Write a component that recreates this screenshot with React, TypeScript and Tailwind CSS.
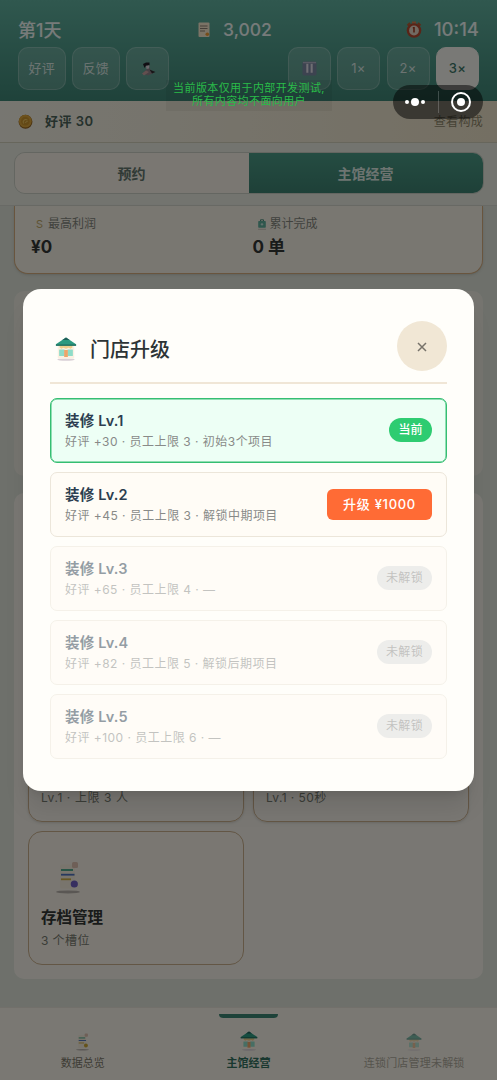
import clsx from "clsx";

type Level = {
  name: string;
  desc: string;
  state: "current" | "available" | "locked";
};

const levels: Level[] = [
  { name: "装修 Lv.1", desc: "好评 +30 · 员工上限 3 · 初始3个项目", state: "current" },
  { name: "装修 Lv.2", desc: "好评 +45 · 员工上限 3 · 解锁中期项目", state: "available" },
  { name: "装修 Lv.3", desc: "好评 +65 · 员工上限 4 · —", state: "locked" },
  { name: "装修 Lv.4", desc: "好评 +82 · 员工上限 5 · 解锁后期项目", state: "locked" },
  { name: "装修 Lv.5", desc: "好评 +100 · 员工上限 6 · —", state: "locked" },
];

function StoreIcon({ className }: { className?: string }) {
  return (
    <svg viewBox="0 0 24 24" preserveAspectRatio="none" className={className}>
      <ellipse cx="12" cy="22.6" rx="9.5" ry="1.1" fill="#d9d0d6" />
      <rect x="3" y="8" width="18" height="13.5" rx="1" fill="#fbf1e2" />
      <path d="M5 8h14v2.5l-2 1.2-2-1-3 1-3-1-2 1-2-1.2z" fill="#f0cf8d" />
      <path d="M12 .5 23 7.2v1.5H1V7.2z" fill="#2c9a80" />
      <path d="M12 .5 16 3H8z" fill="#1f5f58" />
      <path d="M1 7.5h22v1.2H1z" fill="#216b5c" />
      <rect x="4.5" y="12.5" width="6" height="6.5" rx="0.5" fill="#8fdcc8" />
      <rect x="13.5" y="12.5" width="6" height="6.5" rx="0.5" fill="#8fdcc8" />
      <rect x="10" y="13" width="4" height="7" fill="#eda56a" />
    </svg>
  );
}

function OrderIcon({ className }: { className?: string }) {
  return (
    <svg viewBox="0 0 10 11" className={className}>
      <path d="M3.5 2.5V.8h3v1.7" stroke="#4b8b7b" fill="none" />
      <rect x="1.2" y="2" width="7.6" height="6.8" rx="0.8" fill="#5fae9b" />
      <path d="M5 4v2.6M3.7 5.3h2.6" stroke="#d7ece4" strokeWidth="0.9" />
      <path d="M1 10.3h8" stroke="#c2bcb4" strokeWidth="0.8" />
    </svg>
  );
}

function ReportIcon({ className, dot = "#6e5fc0" }: { className?: string; dot?: string }) {
  return (
    <svg viewBox="0 0 24 32" className={className}>
      <rect x="4" y="3" width="15" height="24" rx="2" fill="#f3ebda" />
      <rect x="16" y="0.5" width="6" height="6" rx="1.5" fill="#dcbfae" />
      <path d="M5 8.5h12" stroke="#3fa185" strokeWidth="1.8" />
      <path d="M5 13.2h13.5" stroke="#4f73bd" strokeWidth="1.8" />
      <path d="M5 17.8h10" stroke="#cfae46" strokeWidth="1.8" />
      <ellipse cx="12" cy="30.4" rx="12" ry="1.5" fill="#b5aea9" />
      <circle cx="18.3" cy="22.5" r="3.6" fill={dot} />
    </svg>
  );
}

function NoteIcon() {
  return (
    <svg viewBox="0 0 12 16" className="h-4 w-3">
      <rect x="0.5" y="0.5" width="11" height="14.5" rx="1" fill="#f6e6cc" />
      <path d="M2 4h7.5M2 6.5h7.5M2 9h5" stroke="#8b7e72" strokeWidth="1" />
      <circle cx="9.3" cy="12.2" r="1.8" fill="#ee9b34" />
    </svg>
  );
}

function ClockIcon() {
  return (
    <svg viewBox="0 0 18 18" className="h-[18px] w-[18px]">
      <path d="M2.5 4.5 5 2M15.5 4.5 13 2" stroke="#b35a33" strokeWidth="2" />
      <rect x="7" y="0.5" width="4" height="2" fill="#d67a4c" />
      <circle cx="9" cy="9.5" r="7.3" fill="#b5492f" />
      <circle cx="9" cy="9.5" r="4.9" fill="#e2d5c4" />
      <path d="M7.8 6.8H9v4.7" stroke="#a33c22" strokeWidth="1.6" fill="none" />
    </svg>
  );
}

function CoinIcon() {
  return (
    <svg viewBox="0 0 16 16" className="h-[15px] w-[15px]">
      <circle cx="8" cy="8.3" r="7.4" fill="#8f5f1d" />
      <circle cx="7.8" cy="7.6" r="6.8" fill="#dba53a" />
      <circle cx="7.8" cy="7.6" r="4.6" fill="#c9932c" />
      <path d="M6 10.2c-1.6-2.4 1-5.4 4-3.8M7.5 9.2l2.8-1.6" stroke="#ecc561" strokeWidth="1.1" fill="none" />
    </svg>
  );
}

function SoundIcon() {
  return (
    <svg viewBox="0 0 16 16" className="h-4 w-4">
      <path d="M4.5 3.5 7 8 2.5 12.5 8 14.5l4.5-2L9.5 7z" fill="#8d8189" />
      <path d="M3 3 6 1.5h3.5V5L6 4.5 4.5 7z" fill="#221d26" />
      <path d="m6 5 3.5-1L9 7.5 6.5 8z" fill="#d9d2d8" />
      <path d="m2 12.5 4-3 3 1.5-5 3.5z" fill="#c79f9f" />
      <path d="m9.5 8.5 6 2.5-3.5 1.5z" fill="#332a2f" />
    </svg>
  );
}

function PauseIcon() {
  return (
    <svg viewBox="0 0 16 16" className="h-[15px] w-[15px]">
      <rect x="0.5" y="0.5" width="15" height="15" rx="2" fill="#7a86a0" />
      <path d="M5.7 3v9.5M10.3 3v9.5" stroke="#dfdee6" strokeWidth="2.2" />
      <path d="M1 1.7h14" stroke="#b3b3c6" strokeWidth="1.5" />
    </svg>
  );
}

function HeaderButton({ children, className }: { children: React.ReactNode; className?: string }) {
  return (
    <button
      className={clsx(
        "flex h-[43px] items-center justify-center rounded-[10px] border text-[13px] tracking-[0.3px]",
        className ?? "w-[43px] border-white/20 bg-white/15 text-white/75",
      )}
    >
      {children}
    </button>
  );
}

function Header() {
  return (
    <header className="h-[101px] bg-linear-to-b from-[#60b09e] to-[#3e8575] px-[18px] pt-[18px]">
      <div className="flex h-6 items-center justify-between text-[18px] font-medium text-white/90">
        <span className="w-[140px]">第1天</span>
        <span className="mr-[53px] flex items-center gap-[13px] text-[17.5px]">
          <NoteIcon />
          3,002
        </span>
        <span className="flex w-[114px] items-center justify-end gap-[11px] text-[18.5px]">
          <ClockIcon />
          10:14
        </span>
      </div>
      <div className="mt-[5px] flex justify-between">
        <div className="flex gap-[6.5px]">
          <HeaderButton className="w-[47.5px] border-white/20 bg-white/15 text-white/75">好评</HeaderButton>
          <HeaderButton className="w-[47.5px] border-white/20 bg-white/15 text-white/75">反馈</HeaderButton>
          <HeaderButton>
            <SoundIcon />
          </HeaderButton>
        </div>
        <div className="flex gap-[6.5px]">
          <HeaderButton>
            <PauseIcon />
          </HeaderButton>
          <HeaderButton>1×</HeaderButton>
          <HeaderButton>2×</HeaderButton>
          <HeaderButton className="w-[43px] border-[#f2f2ec] bg-[#f2f2ec] font-medium text-[#3d7768]">3×</HeaderButton>
        </div>
      </div>
    </header>
  );
}

function StatusBar() {
  return (
    <div className="flex h-[42px] items-center border-b border-[#cfccb8] bg-linear-to-r from-[#efede2] to-[#e9dfc6] pr-[14px] pl-[18px] text-[13px]">
      <CoinIcon />
      <span className="ml-3 font-semibold tracking-[0.5px] text-[#4b6259]">好评 30</span>
      <span className="ml-auto text-[12px] tracking-[0.3px] text-[#8c8568]">查看构成</span>
    </div>
  );
}

function Tabs() {
  return (
    <div className="h-[63px] border-b border-[#d3d5cc] bg-[#e6e8df] px-[13.5px] pt-[9px]">
      <div className="flex h-[42px] overflow-hidden rounded-[11px] border border-[#c9ccc2] text-[14px] font-bold">
        <div className="flex flex-1 items-center justify-center bg-[#f4efe4] text-[#62756c]">预约</div>
        <div className="flex flex-1 items-center justify-center bg-linear-to-b from-[#4a9985] to-[#3d8170] text-[#dce9e3]">
          主馆经营
        </div>
      </div>
    </div>
  );
}

function Stats() {
  return (
    <section className="mx-[14px] flex h-[68px] rounded-b-[14px] border-x-[1.5px] border-b-[1.5px] border-[#d3ab7c] bg-[#f3eee3] px-4 pt-[9px] shadow-sm">
      <div className="flex-1">
        <p className="flex h-[18px] items-center text-[12px] text-[#82857b]">
          <span className="mr-1 ml-[5px] w-2 text-[11px] text-[#bda768]">S</span>
          最高利润
        </p>
        <p className="text-[17px] leading-7 font-bold text-[#323735]">¥0</p>
      </div>
      <div className="flex-1 pl-2">
        <p className="flex h-[18px] items-center text-[12px] text-[#82857b]">
          <OrderIcon className="mr-[3px] ml-1 h-[11px] w-[10px]" />
          累计完成
        </p>
        <p className="text-[17px] leading-7 font-bold text-[#323735]">0 单</p>
      </div>
    </section>
  );
}

function ManageCards() {
  return (
    <section className="mx-[14px] mt-[17px] flex h-[486px] flex-col justify-end rounded-[10px] bg-[#f2efe7] p-[14px]">
      <div className="grid grid-cols-2 gap-[9px]">
        <div className="flex h-[134px] flex-col justify-end rounded-[14px] border-[1.5px] border-[#c6ac8a] px-3 pb-[14px] text-[12px] leading-[18px] tracking-[0.6px] text-[#777a70] shadow-sm">
          Lv.1 · 上限 3 人
        </div>
        <div className="flex h-[134px] flex-col justify-end rounded-[14px] border-[1.5px] border-[#c6ac8a] px-3 pb-[14px] text-[12px] leading-[18px] tracking-[0.4px] text-[#777a70] shadow-sm">
          Lv.1 · 50秒
        </div>
        <div className="h-[134px] rounded-[14px] border-[1.5px] border-[#c6ac8a] bg-[#f4efe4] px-3 pt-[29px]">
          <ReportIcon className="ml-[15px] h-[33px] w-6" />
          <p className="mt-[12px] text-[15.5px] leading-[24px] font-bold text-[#323735]">存档管理</p>
          <p className="mt-[2px] text-[12px] leading-[18px] tracking-[0.4px] text-[#777a70]">3 个槽位</p>
        </div>
      </div>
    </section>
  );
}

function BottomNav() {
  return (
    <nav className="mt-[28px] flex h-[74px] border-t border-[#e4e1d7] bg-[#f4f0e6] text-[11px]">
      <div className="flex flex-1 flex-col items-center pt-[25px] text-[#7c7869]">
        <ReportIcon className="h-[18px] w-[13px]" dot="#cba735" />
        <span className="mt-1 leading-4">数据总览</span>
      </div>
      <div className="flex flex-1 flex-col items-center pt-[6px] font-bold text-[#33705f]">
        <span className="h-[3.5px] w-[59px] rounded-b-sm bg-[#3b8572]" />
        <StoreIcon className="mt-[13.5px] h-5 w-[18px]" />
        <span className="mt-1 leading-4">主馆经营</span>
      </div>
      <div className="flex flex-1 flex-col items-center pt-[25px] text-[#7c7869] opacity-60">
        <StoreIcon className="h-[18px] w-[16px]" />
        <span className="mt-1 leading-4 tracking-[0.2px]">连锁门店管理未解锁</span>
      </div>
    </nav>
  );
}

function LevelRow({ level }: { level: Level }) {
  return (
    <li
      className={clsx(
        "flex h-[65px] items-center justify-between rounded-[7px] border-[1.5px] px-[14px]",
        level.state === "current" && "border-[#35be72] bg-[#edfff5] shadow-[inset_0_0_0_0.5px_#35be72]",
        level.state === "available" && "border-[#ece6da] bg-[#fffcf6]",
        level.state === "locked" && "border-[#ece6da] bg-[#fffcf6] opacity-50",
      )}
    >
      <div className="whitespace-nowrap">
        <p className="text-[14.5px] leading-[21px] font-semibold tracking-[0.2px] text-[#2c3e50]">{level.name}</p>
        <p className="text-[12px] leading-[21px] tracking-[0.47px] text-[#888a88]">{level.desc}</p>
      </div>
      {level.state === "current" && (
        <span className="mb-px flex h-6 w-[43px] items-center justify-center rounded-full bg-[#2ecc71] text-[12px] font-medium text-white">
          当前
        </span>
      )}
      {level.state === "available" && (
        <button className="h-[31px] w-[105px] rounded-[6px] bg-[#ff6b35] text-[13px] font-medium tracking-[0.7px] text-white">
          升级 ¥1000
        </button>
      )}
      {level.state === "locked" && (
        <span className="mb-px flex h-6 w-[55px] items-center justify-center rounded-full bg-[#dddddd] text-[12px] tracking-[0.3px] text-[#888888]">
          未解锁
        </span>
      )}
    </li>
  );
}

function UpgradeDialog() {
  return (
    <div className="absolute inset-0 flex items-center justify-center bg-black/50">
      <div className="h-[502px] w-[451px] rounded-[18px] bg-[#fffefa] px-[27px] pt-8 shadow-xl">
        <div className="flex h-[63px] justify-between border-b-2 border-[#f0e6d6]">
          <div className="flex items-center gap-[13px] self-start pt-[11px] pl-[5px]">
            <StoreIcon className="h-6 w-[22px]" />
            <h2 className="mt-[2px] text-[20px] leading-[32px] font-medium text-[#2d3436]">门店升级</h2>
          </div>
          <button className="flex h-[50px] w-[50px] items-center justify-center rounded-full bg-[#f1e7d5]">
            <svg viewBox="0 0 10 10" className="mt-[2px] h-[10px] w-[10px]">
              <path d="m1 1 8 8M9 1 1 9" stroke="#77726a" strokeWidth="1.5" />
            </svg>
          </button>
        </div>
        <ul className="mt-[14px] flex flex-col gap-[9px]">
          {levels.map((level) => (
            <LevelRow key={level.name} level={level} />
          ))}
        </ul>
      </div>
    </div>
  );
}

export default function App() {
  return (
    <div className="relative h-[1080px] w-[497px] overflow-hidden bg-[#dce0d6] font-[Inter,'Noto_Sans_CJK_SC',sans-serif]">
      <Header />
      <StatusBar />
      <Tabs />
      <Stats />
      <section className="mx-[14px] mt-[17px] h-[185px] rounded-[10px] bg-[#eae8df]" />
      <ManageCards />
      <BottomNav />
      <UpgradeDialog />

      {/* watermark and host capsule float above everything */}
      <div className="absolute top-[80px] left-[166px] w-[166px] bg-black/5 pt-[1.5px] pb-[3px] text-center text-[11px] leading-[13px] tracking-[0.4px] whitespace-nowrap text-[#2abb49]">
        当前版本仅用于内部开发测试,
        <br />
        所有内容均不面向用户
      </div>
      <div className="absolute top-[85px] left-[393px] flex h-[34px] w-[90px] items-center rounded-full bg-black/50">
        <div className="flex flex-1 items-center justify-center gap-[2px]">
          <i className="h-1 w-1 rounded-full bg-white" />
          <i className="h-2 w-2 rounded-full bg-white" />
          <i className="h-1 w-1 rounded-full bg-white" />
        </div>
        <span className="h-[22px] w-px bg-white/20" />
        <div className="flex flex-1 items-center justify-center">
          <span className="flex h-5 w-5 items-center justify-center rounded-full border-2 border-white">
            <i className="h-2 w-2 rounded-full bg-white" />
          </span>
        </div>
      </div>
    </div>
  );
}
